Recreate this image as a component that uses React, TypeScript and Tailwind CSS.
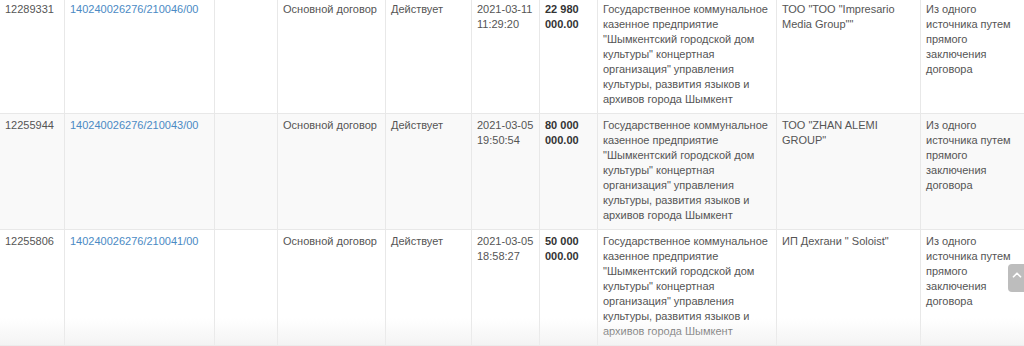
import { ChevronUp } from "lucide-react";

type Row = {
  id: string;
  num: string;
  date: string[];
  amount: string[];
  supplier: string[];
};

const customer = [
  "Государственное коммунальное",
  "казенное предприятие",
  "\"Шымкентский городской дом",
  "культуры\" концертная",
  "организация\" управления",
  "культуры, развития языков и",
  "архивов города Шымкент",
];

const method = ["Из одного", "источника путем", "прямого", "заключения", "договора"];

const rows: Row[] = [
  {
    id: "12289331",
    num: "140240026276/210046/00",
    date: ["2021-03-11", "11:29:20"],
    amount: ["22 980", "000.00"],
    supplier: ["ТОО \"ТОО \"Impresario", "Media Group\"\""],
  },
  {
    id: "12255944",
    num: "140240026276/210043/00",
    date: ["2021-03-05", "19:50:54"],
    amount: ["80 000", "000.00"],
    supplier: ["ТОО \"ZHAN ALEMI", "GROUP\""],
  },
  {
    id: "12255806",
    num: "140240026276/210041/00",
    date: ["2021-03-05", "18:58:27"],
    amount: ["50 000", "000.00"],
    supplier: ["ИП Дехгани \" Soloist\""],
  },
];

function Lines({ lines }: { lines: string[] }) {
  return (
    <>
      {lines.map((l, i) => (
        <div key={i} className="whitespace-nowrap">
          {l}
        </div>
      ))}
    </>
  );
}

const td = "border border-[#e8e8e8] px-[5px] pt-[4px] pb-[6px] align-top";

export default function App() {
  return (
    <div
      className="relative h-[346px] w-[1024px] overflow-hidden bg-white text-[11px] leading-[15px] text-[#555]"
      style={{ fontFamily: "Helvetica, 'Liberation Sans', Arial, sans-serif" }}
    >
      <table className="-mt-[3px] -ml-px w-[1060px] table-fixed border-collapse">
        <colgroup>
          <col className="w-[65px]" />
          <col className="w-[150px]" />
          <col className="w-[63px]" />
          <col className="w-[108px]" />
          <col className="w-[86px]" />
          <col className="w-[68px]" />
          <col className="w-[58px]" />
          <col className="w-[179px]" />
          <col className="w-[144px]" />
          <col className="w-[139px]" />
        </colgroup>
        <tbody>
          {rows.map((r, i) => (
            <tr key={r.id} className={i % 2 === 1 ? "bg-[#f9f9f9]" : "bg-white"}>
              <td className={td}>{r.id}</td>
              <td className={td}>
                <a href="#" className="text-[#4b8ac4]">
                  {r.num}
                </a>
              </td>
              <td className={td}></td>
              <td className={td}>Основной договор</td>
              <td className={td}>Действует</td>
              <td className={td}>
                <Lines lines={r.date} />
              </td>
              <td className={`${td} font-bold text-[#333]`}>
                <Lines lines={r.amount} />
              </td>
              <td className={td}>
                <Lines lines={customer} />
              </td>
              <td className={td}>
                <Lines lines={r.supplier} />
              </td>
              <td className={td}>
                <Lines lines={method} />
              </td>
            </tr>
          ))}
        </tbody>
      </table>

      <div className="pointer-events-none absolute bottom-0 left-0 h-[28px] w-full bg-gradient-to-b from-transparent to-[#eeeeee]/70" />

      <button className="absolute right-[-12px] top-[264px] flex h-[28px] w-[28px] items-start justify-start rounded-[4px] bg-[#bdbdbd] pl-[2px] pt-[4px] text-white">
        <ChevronUp size={14} strokeWidth={3} />
      </button>
    </div>
  );
}
